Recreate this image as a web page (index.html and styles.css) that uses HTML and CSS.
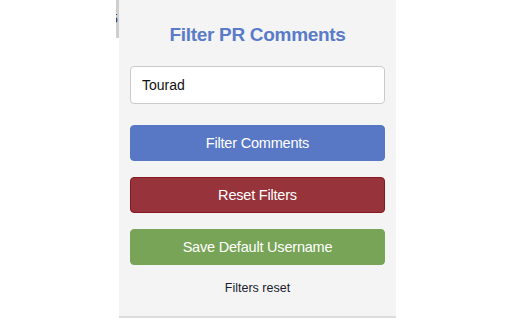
FILE: index.html
```html
<!DOCTYPE html>
<html>
<head>
<meta charset="utf-8">
<link rel="stylesheet" href="styles.css">
</head>
<body>
<div class="page">
  <div class="gutter"></div>
  <div class="edge"><span class="edge-glyph">5</span></div>
  <div class="panel">
    <h1 class="title">Filter PR Comments</h1>
    <input class="field" type="text" value="Tourad">
    <button class="btn btn-blue">Filter Comments</button>
    <button class="btn btn-red">Reset Filters</button>
    <button class="btn btn-green">Save Default Username</button>
    <p class="status">Filters reset</p>
  </div>
</div>
</body>
</html>
```
FILE: styles.css
```css
* { box-sizing: border-box; }
html, body { margin: 0; padding: 0; background: #fff; }
body { font-family: "Liberation Sans", Arial, sans-serif; }
.page { display: flex; align-items: flex-start; width: 512px; height: 320px; }
.gutter { width: 116px; flex: none; }
.edge {
  width: 3px; height: 38px; flex: none;
  background: #cfcfcf; position: relative; overflow: hidden;
}
.edge-glyph {
  position: absolute; left: -5px; top: 13px;
  font-size: 12px; color: #1c2230; line-height: 12px;
}
.panel {
  width: 277px; height: 318px; flex: none;
  background: #f4f4f4;
  border-bottom: 2px solid #dcdcdc;
  padding: 0 11px;
  display: flex; flex-direction: column;
}
.title {
  margin: 24px 0 0; text-align: center;
  font-size: 19px; font-weight: bold; color: #5a7bc8; line-height: 22px;
  letter-spacing: -0.3px;
}
.field {
  margin-top: 20px; height: 38px; width: 100%;
  border: 1px solid #cacaca; border-radius: 4px; background: #fff;
  padding: 0 11px; font-family: inherit; font-size: 14px; color: #111;
}
.btn {
  width: 100%; height: 36px; border-radius: 4px;
  font-family: inherit; font-size: 14.5px; letter-spacing: -0.2px; color: #fff;
  border: 1px solid transparent; padding: 0;
}
.btn-blue { margin-top: 21px; background: #5878c6; border-color: #5878c6; }
.btn-red { margin-top: 16px; background: #97343b; border-color: #8a1820; }
.btn-green { margin-top: 16px; background: #77a456; border-color: #77a456; }
.status {
  margin: 15px 0 0; text-align: center; font-size: 12.5px; color: #1a1d2e; line-height: 16px;
}
```
